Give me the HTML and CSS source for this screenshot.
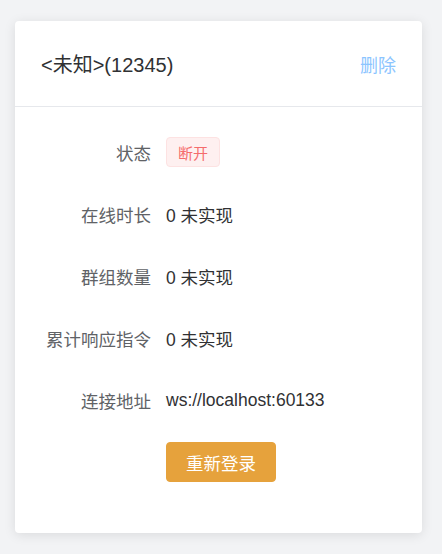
FILE: index.html
```html
<!DOCTYPE html>
<html>
<head>
<meta charset="utf-8">
<link rel="stylesheet" href="styles.css">
</head>
<body>
<div class="card">
  <div class="card-header">
    <span class="title">&lt;未知&gt;(12345)</span>
    <span class="del">删除</span>
  </div>
  <div class="card-body">
    <div class="row"><div class="label">状态</div><div class="value"><span class="tag">断开</span></div></div>
    <div class="row"><div class="label">在线时长</div><div class="value">0 未实现</div></div>
    <div class="row"><div class="label">群组数量</div><div class="value">0 未实现</div></div>
    <div class="row"><div class="label">累计响应指令</div><div class="value">0 未实现</div></div>
    <div class="row"><div class="label">连接地址</div><div class="value">ws://localhost:60133</div></div>
    <div class="row last"><div class="label"></div><div class="value"><button class="btn">重新登录</button></div></div>
  </div>
</div>
</body>
</html>
```
FILE: styles.css
```css
html, body { margin: 0; padding: 0; }
body {
  background: #f2f3f5;
  font-family: "Liberation Sans", "Noto Sans CJK SC", sans-serif;
  padding: 21px 20px 21px 15px;
  height: 554px;
  box-sizing: border-box;
}
.card {
  width: 407px;
  height: 512px;
  box-sizing: border-box;
  background: #fff;
  border-radius: 4px;
  box-shadow: 0 2px 12px rgba(0,0,0,0.1);
  overflow: hidden;
}
.card-header {
  height: 86px;
  box-sizing: border-box;
  border-bottom: 1px solid #e6e8ec;
  display: flex;
  align-items: center;
  justify-content: space-between;
  padding: 0 26px;
}
.title { font-size: 20px; color: #303133; }
.del { font-size: 18px; color: #8cc5ff; }
.card-body { padding: 25px 26px; }
.row {
  display: flex;
  align-items: center;
  height: 40px;
  margin-bottom: 22px;
  font-size: 17.5px;
}
.row.last { margin-bottom: 0; margin-top: 3px; }
.label {
  width: 125px;
  box-sizing: border-box;
  padding-right: 15px;
  text-align: right;
  color: #606266;
}
.value { color: #303133; }
.tag {
  display: inline-flex;
  align-items: center;
  justify-content: center;
  width: 54px;
  height: 30px;
  box-sizing: border-box;
  background: #fef0f0;
  border: 1px solid #fde2e2;
  border-radius: 4px;
  color: #f56c6c;
  font-size: 15px;
}
.btn {
  width: 110px;
  height: 40px;
  background: #e6a23c;
  border: 1px solid #e6a23c;
  border-radius: 4px;
  color: #fff;
  font-size: 17.5px;
  font-family: inherit;
  padding: 0;
}
```
